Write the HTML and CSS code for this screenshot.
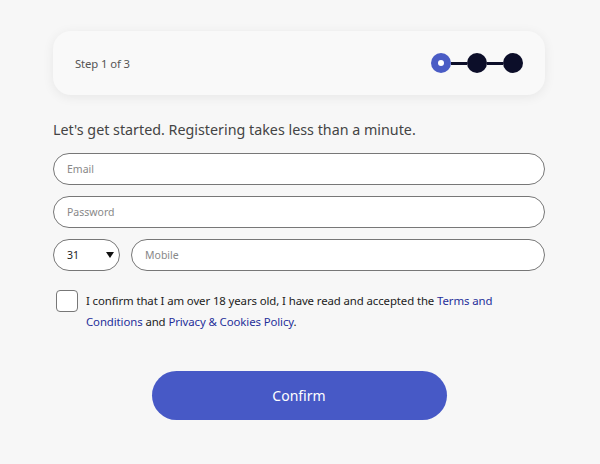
FILE: index.html
```html
<!DOCTYPE html>
<html>
<head>
<meta charset="utf-8">
<link rel="stylesheet" href="styles.css">
</head>
<body>
<div class="page">
  <div class="card">
    <span class="step-label">Step 1 of 3</span>
    <div class="stepper">
      <span class="dot dot-active"></span>
      <span class="bar"></span>
      <span class="dot"></span>
      <span class="bar"></span>
      <span class="dot"></span>
    </div>
  </div>
  <p class="intro">Let's get started. Registering takes less than a minute.</p>
  <div class="field">Email</div>
  <div class="field">Password</div>
  <div class="row">
    <div class="select"><span>31</span><span class="caret"></span></div>
    <div class="field grow">Mobile</div>
  </div>
  <div class="consent">
    <span class="checkbox"></span>
    <p class="consent-text">I confirm that I am over 18 years old, I have read and accepted the <a class="link">Terms and Conditions</a> and <a class="link">Privacy &amp; Cookies Policy</a>.</p>
  </div>
  <div class="actions">
    <button class="confirm">Confirm</button>
  </div>
</div>
</body>
</html>
```
FILE: styles.css
```css
* { box-sizing: border-box; }
html, body { margin: 0; padding: 0; }
body {
  background: #f7f7f7;
  font-family: "Noto Sans", "Open Sans", sans-serif;
  color: #222;
  width: 600px;
  height: 464px;
  overflow: hidden;
}
.page {
  padding: 31px 55px 0 53px;
  display: flex;
  flex-direction: column;
}
.card {
  height: 64px;
  background: #f9f9f9;
  border-radius: 18px;
  box-shadow: 0 2px 12px rgba(0,0,0,0.07);
  display: flex;
  align-items: center;
  justify-content: space-between;
  padding: 0 22px 0 22px;
}
.step-label {
  font-size: 11.3px;
  color: #555;
  letter-spacing: -0.1px;
}
.stepper {
  display: flex;
  align-items: center;
}
.dot {
  width: 20px;
  height: 20px;
  border-radius: 50%;
  background: #0c0e29;
}
.dot-active {
  background: #4a5cc5;
  position: relative;
}
.dot-active::after {
  content: "";
  position: absolute;
  left: 7px;
  top: 7px;
  width: 6px;
  height: 6px;
  border-radius: 50%;
  background: #fff;
}
.bar {
  width: 16px;
  height: 3px;
  background: #0c0e29;
}
.intro {
  margin: 25px 0 13px;
  font-size: 14.3px;
  color: #444;
  line-height: 20px;
}
.field {
  height: 32px;
  border: 1px solid #777;
  border-radius: 16px;
  background: #fff;
  display: flex;
  align-items: center;
  padding-left: 13px;
  font-size: 10.5px;
  color: #888;
  margin-bottom: 11px;
}
.row {
  display: flex;
  gap: 11px;
}
.grow { flex: 1; }
.select {
  width: 67px;
  height: 32px;
  border: 1px solid #777;
  border-radius: 16px;
  background: #fff;
  display: flex;
  align-items: center;
  justify-content: space-between;
  padding: 0 5px 0 13px;
  font-size: 10.5px;
  color: #222;
}
.caret {
  width: 0;
  height: 0;
  border-left: 4.5px solid transparent;
  border-right: 4.5px solid transparent;
  border-top: 6px solid #111;
}
.consent {
  display: flex;
  align-items: flex-start;
  margin-top: 7px;
  padding-left: 3px;
}
.checkbox {
  flex: none;
  width: 22px;
  height: 22px;
  border: 1px solid #777;
  border-radius: 4px;
  background: #fff;
  margin-top: 1px;
}
.consent-text {
  margin: 1px 0 0 8px;
  font-size: 11.4px;
  letter-spacing: -0.1px;
  line-height: 21px;
  color: #222;
}
.link {
  color: #1f2f9a;
}
.actions {
  display: flex;
  justify-content: center;
  margin-top: 39px;
  padding-left: 0;
}
.confirm {
  width: 295px;
  height: 49px;
  border: none;
  border-radius: 25px;
  background: #4759c6;
  color: #fff;
  font-family: "Noto Sans", "Open Sans", sans-serif;
  font-size: 14px;
}
```
